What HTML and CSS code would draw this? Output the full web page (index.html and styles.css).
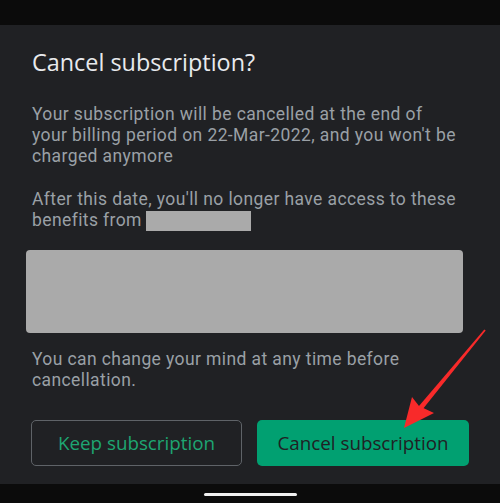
FILE: index.html
```html
<!DOCTYPE html>
<html>
<head>
<meta charset="utf-8">
<link rel="stylesheet" href="styles.css">
</head>
<body>
<div class="screen">
  <div class="status-bar"></div>
  <div class="dialog">
    <h1 class="title">Cancel subscription?</h1>
    <p class="text">Your subscription will be cancelled at the end of<br>your billing period on 22-Mar-2022, and you won't be<br>charged anymore</p>
    <p class="text text-gap">After this date, you'll no longer have access to these<br>benefits from <span class="redact"></span></p>
    <div class="banner"></div>
    <p class="text">You can change your mind at any time before<br>cancellation.</p>
    <div class="actions">
      <button class="btn btn-outline">Keep subscription</button>
      <button class="btn btn-filled">Cancel subscription</button>
    </div>
  </div>
  <div class="nav-bar"><span class="home-pill"></span></div>
  <svg class="arrow" width="500" height="503" viewBox="0 0 500 503">
    <polygon points="484.3,329.4 485.7,330.6 421.9,410.3 418.1,407.1" fill="#f82a2a"/>
    <polygon points="404,428 412,397 419,406 434,413" fill="#f82a2a"/>
  </svg>
</div>
</body>
</html>
```
FILE: styles.css
```css
* { box-sizing: border-box; }
html, body { margin: 0; padding: 0; background: #0b0b0b; }
.screen {
  position: relative;
  width: 500px;
  height: 503px;
  display: flex;
  flex-direction: column;
  overflow: hidden;
}
.status-bar { height: 25px; background: #0b0b0b; flex: none; }
.dialog {
  flex: 1;
  background: #202124;
  padding: 21px 31px 0 32px;
  display: flex;
  flex-direction: column;
}
.title {
  margin: 0;
  font-family: "Open Sans", "Roboto", sans-serif;
  font-weight: 400;
  font-size: 23.4px;
  line-height: 32px;
  color: #e8eaed;
}
.text {
  margin: 26px 0 0;
  font-family: "Roboto", sans-serif;
  font-size: 17.5px;
  letter-spacing: 0.4px;
  line-height: 21px;
  color: #9aa0a6;
  white-space: nowrap;
}
.text-gap { margin-top: 22px; }
.redact {
  display: inline-block;
  width: 105px;
  height: 20px;
  background: #aaaaaa;
  vertical-align: -5px;
  margin-left: -1px;
}
.banner {
  margin: 19px 0 0 -6px;
  width: 437px;
  height: 83px;
  background: #aaaaaa;
  border-radius: 4px;
}
.banner + .text { margin-top: 16px; }
.actions {
  margin: 29px 0 0 -1px;
  width: 438px;
  display: grid;
  grid-template-columns: 211px 212px;
  column-gap: 15px;
}
.btn {
  height: 46px;
  border-radius: 5px;
  font-family: "Open Sans", "Roboto", sans-serif;
  font-size: 18.8px;
  font-weight: 500;
  padding: 0;
  cursor: pointer;
}
.btn-outline {
  background: transparent;
  border: 1px solid #5f6368;
  color: #1ea672;
}
.btn-filled {
  background: #01a071;
  border: none;
  color: #202124;
}
.nav-bar {
  height: 19px;
  flex: none;
  background: #0b0b0b;
  display: flex;
  justify-content: center;
  padding-top: 9px;
}
.home-pill {
  width: 93px;
  height: 3px;
  border-radius: 2px;
  background: #f0f0f0;
}
.arrow {
  position: absolute;
  left: 0;
  top: 0;
  pointer-events: none;
}
```
